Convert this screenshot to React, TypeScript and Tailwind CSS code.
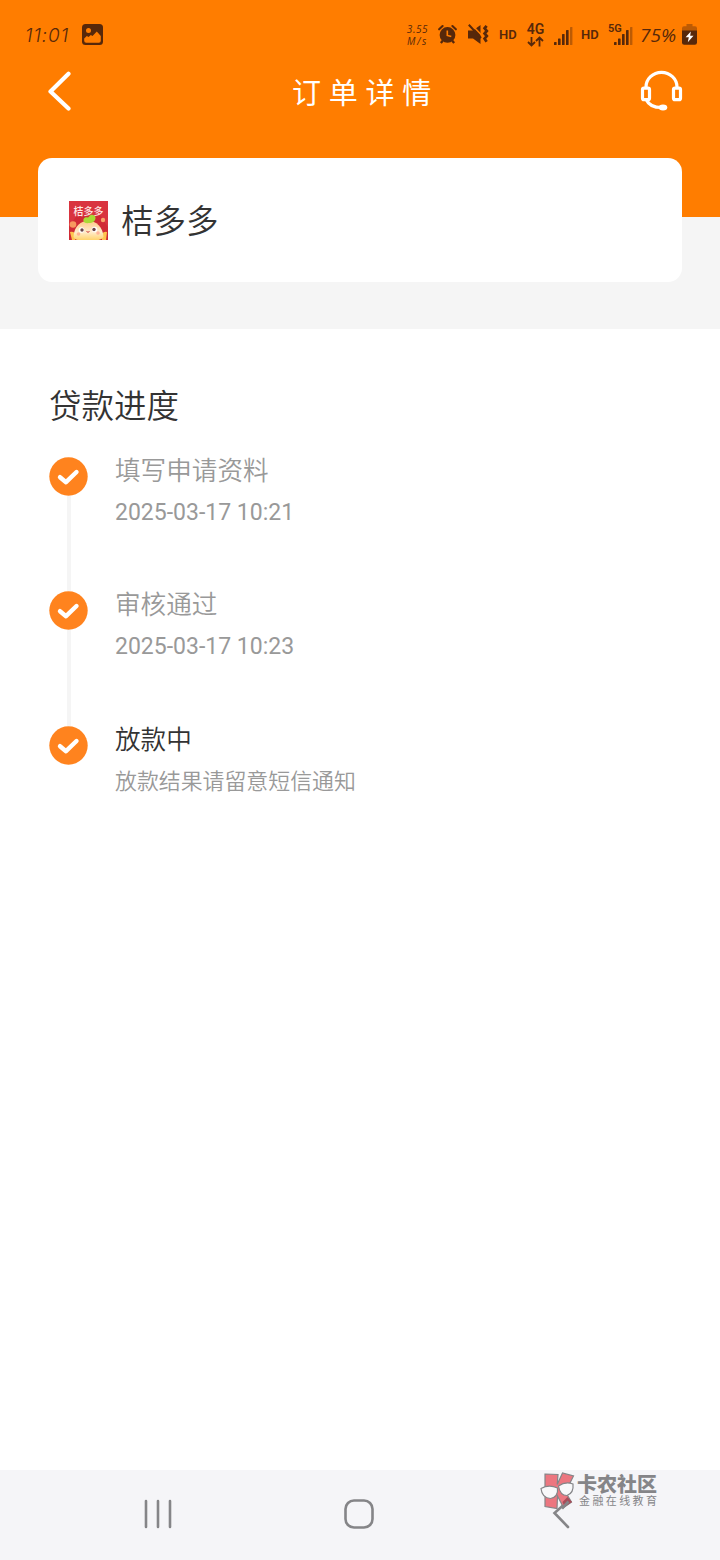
const steps = [
  { title: "填写申请资料", note: "2025-03-17 10:21", current: false },
  { title: "审核通过", note: "2025-03-17 10:23", current: false },
  { title: "放款中", note: "放款结果请留意短信通知", current: true },
];

const PictureIcon = () => (
  <svg className="ml-3 h-[21px] w-[21px]" viewBox="0 0 21 21">
    <rect width="21" height="21" rx="3.5" fill="#57280a" />
    <circle cx="6.5" cy="6.5" r="2.5" fill="#ff7d00" />
    <path d="M2.2 14.5l2.600-2.600 1.800 1 2.200-2 1.700 1 4.300-4.400 4 4.500v4.700q0 2-2 2H4.200q-2 0-2-2z" fill="#ff7d00" />
  </svg>
);

const AlarmIcon = () => (
  <svg className="ml-[9px] h-[21px] w-[19px]" viewBox="0 0 20 21" fill="none" stroke="#57280a">
    <circle cx="10" cy="11" r="8.300" fill="#57280a" stroke="none" />
    <path d="M1.2 5l3.600-3.400M18.800 5l-3.600-3.400" strokeWidth="2.2" strokeLinecap="round" />
    <path d="M5 17l-2 2.5M15 17l2 2.5" strokeWidth="2.400" />
    <path d="M9.8 6.3v5.200l4.200 1.200" stroke="#ff7d00" strokeWidth="1.7" />
  </svg>
);

const MuteIcon = () => (
  <svg className="ml-[11px] h-[21px] w-[21px]" viewBox="0 0 21 21">
    <path d="M0 6.500h5L12.500 1v19L5 14.500H0z" fill="#57280a" />
    <path d="M2.500-.5L14 11.500" stroke="#ff7d00" strokeWidth="1.6" />
    <path d="M.8 .8L13 14" stroke="#57280a" strokeWidth="2" />
    <path d="M18.600 1.800l-2 2.500 2.200 2.600-2.200 2.600 2.200 2.600-2.200 2.600 2 3" fill="none" stroke="#57280a" strokeWidth="2.800" />
  </svg>
);

const SignalBars = () => (
  <svg className="h-[18px] w-[19px]" viewBox="0 0 19 18" fill="#57280a">
    <rect x="0" y="15" width="2.6" height="3" rx=".6" />
    <rect x="4" y="11.5" width="2.6" height="6.5" rx=".6" />
    <rect x="8" y="7" width="2.6" height="11" rx=".6" />
    <rect x="12" y="3" width="2.6" height="15" rx=".6" />
    <rect x="16" y="0" width="2.4" height="18" rx=".6" opacity=".4" />
  </svg>
);

const BatteryIcon = () => (
  <svg className="ml-auto h-[21px] w-[15px]" viewBox="0 0 15 21">
    <path d="M4.5 0h6v2.3H13q2 0 2 2V8H0V4.300q0-2 2-2h2.500z" fill="#57280a" opacity=".4" />
    <path d="M0 6.500h15V18.500q0 2.200-2.200 2.200H2.200Q0 20.700 0 18.500z" fill="#57280a" />
    <path d="M8.800 7.500L3.600 13.300h3.200l-1 5 5.700-6.500H8.200z" fill="#fff" />
  </svg>
);

const StatusBar = () => (
  <div className="flex h-[68px] items-center pl-[25px] pr-[23px] text-[#57280a]">
    <span className="w-[45px] whitespace-nowrap pt-[3px] font-['Inter'] text-[19px] font-light italic leading-none tracking-[0.900px]">
      11:01
    </span>
    <PictureIcon />
    <div className="ml-auto flex w-[291px] shrink-0 items-center">
      <div className="w-[23px] pt-[2px] text-center font-['Open_Sans'] text-[10px] italic leading-[12px]">
        <div className="tracking-[0.6px]">3.55</div>
        <div className="tracking-[1.600px]">M/s</div>
      </div>
      <AlarmIcon />
      <MuteIcon />
      <span className="ml-[10px] w-[19px] font-['Roboto'] text-[13px] font-semibold leading-none">HD</span>
      <div className="ml-2 flex w-[19px] flex-col items-center pt-px">
        <span className="font-['Roboto'] text-[14px] font-semibold leading-[13px]">4G</span>
        <svg className="h-[11px] w-[17px]" viewBox="0 0 17 11" fill="none" stroke="#57280a" strokeWidth="1.8">
          <path d="M4.500 1v8.500M1 6l3.500 3.500L8 6M12.500 10.500V1.500M9 5l3.500-3.500L16 5" />
        </svg>
      </div>
      <div className="ml-[9px] pt-1"><SignalBars /></div>
      <span className="ml-2 w-[19px] font-['Roboto'] text-[13px] font-semibold leading-none">HD</span>
      <div className="relative ml-[14px] pt-1">
        <span className="absolute -left-[6px] top-0 font-['Roboto'] text-[11px] font-semibold leading-none">5G</span>
        <SignalBars />
      </div>
      <span className="ml-[7px] whitespace-nowrap pt-[2px] font-['Open_Sans'] text-[19px] italic leading-none">75%</span>
      <BatteryIcon />
    </div>
  </div>
);

const TitleBar = () => (
  <div className="flex h-[50px] items-center justify-between pl-[47px] pr-[37px] text-white">
    <svg className="mt-[-4px] h-[40px] w-[24px]" viewBox="0 0 24 40" fill="none" stroke="currentColor" strokeWidth="4.200" strokeLinecap="round" strokeLinejoin="round">
      <path d="M21.500 2.800L3.500 20.500 21.500 37.500" />
    </svg>
    <h1 className="ml-[20px] mt-[3px] text-[29px] leading-none tracking-[7.800px]">订单详情</h1>
    <svg className="mt-[-4px] h-[42px] w-[43px]" viewBox="0 0 43 42" fill="none" stroke="currentColor" strokeWidth="3.200">
      <path d="M6 18v-1a15.500 14.700 0 0 1 31 0V18" />
      <rect x="2.500" y="18.200" width="7" height="11.500" rx="1.500" />
      <rect x="33.500" y="18.200" width="7" height="11.500" rx="1.500" />
      <path d="M6.500 30c2 4.500 7 7.500 15 7.500" />
      <ellipse cx="23" cy="37.500" rx="4.300" ry="2.900" fill="currentColor" stroke="none" />
    </svg>
  </div>
);

const AppLogo = () => (
  <svg className="h-[39px] w-[39px]" viewBox="0 0 39 39">
    <defs>
      <linearGradient id="peel" x1="0" y1="0" x2="0" y2="1">
        <stop offset="0" stopColor="#ffc886" />
        <stop offset=".6" stopColor="#ffeccb" />
        <stop offset="1" stopColor="#ffd36b" />
      </linearGradient>
    </defs>
    <rect width="39" height="39" fill="#d9343f" />
    <path d="M0 39V26l8-12h23l8 12v13z" fill="#c9222d" opacity=".55" />
    <circle cx="4" cy="23.500" r="3.300" fill="#f7995f" />
    <circle cx="34" cy="19" r="2.200" fill="#f9a46a" />
    <path d="M1 31q2-1 5 1v7H3q-1-4-2-8M38 31q-3-1-5 2v6h4z" fill="#ffc44f" />
    <path d="M4.500 36C5 25 12 20 19.500 19.500 27 20 34 26 34.500 36q-2 3-5 3H9q-3 0-4.500-3z" fill="url(#peel)" />
    <text x="19.500" y="13.500" textAnchor="middle" fontSize="10" fontWeight="500" fill="#ffe9e4" fontFamily="'Noto Sans CJK SC', sans-serif">桔多多</text>
    <path d="M20 22c-6 1-7-4-4-5.500 2-1 3 1 4-1 2-3.500 7-1 6.500 1.500 0 3-3 5-6.500 5z" fill="#a9da35" />
    <circle cx="12.500" cy="29" r="2.800" fill="#fff" />
    <circle cx="25.500" cy="28.500" r="2.800" fill="#fff" />
    <circle cx="13" cy="29" r="1.700" fill="#6b4548" />
    <circle cx="25" cy="28.500" r="1.700" fill="#6b4548" />
    <path d="M17.500 30.500q1.500 1.500 3 0" stroke="#c33" fill="none" />
    <circle cx="9.500" cy="33" r="1.800" fill="#ff9d86" opacity=".7" />
    <circle cx="29" cy="32" r="1.800" fill="#ff9d86" opacity=".7" />
  </svg>
);

const CheckBadge = () => (
  <svg className="h-[39px] w-[39px] shrink-0" viewBox="0 0 39 39">
    <circle cx="19.500" cy="19.500" r="19.200" fill="#ff831e" />
    <path d="M11 20.200l6 5 10.500-10.200" fill="none" stroke="#fff" strokeWidth="4.400" strokeLinecap="round" strokeLinejoin="round" />
  </svg>
);

const Watermark = () => (
  <div className="absolute left-[540px] top-0 flex text-[#858588]">
    <svg className="mt-px h-[40px] w-[37px]" viewBox="0 0 37 40" stroke="#858588" strokeWidth="1.2">
      <path d="M5 3l13 .5-.8 10L22.500 2l11 3-8 16 6 10-8 5.500L17.500 25 17 37.500 5 35.500z" fill="#ec7680" />
      <path d="M22.500 31l5-5 4.500 5-7.500 5z" fill="#a74d5a" stroke="none" />
      <path d="M1 17.500Q9 13 17.500 17q1 9-7 10.500Q2 27 1 17.500zM18.500 15q7-5 14.500-2 1 9-6 11.500-7 0-8.500-9.500z" fill="#f8f8fa" />
      <path d="M28.500 30.500l-6.500 7" strokeWidth="2.600" />
    </svg>
    <div className="mt-[5px] whitespace-nowrap">
      <div className="text-[20px] font-black leading-[21px]">卡农社区</div>
      <div className="ml-[2px] text-[11px] leading-[12px] tracking-[2.400px]">金融在线教育</div>
    </div>
  </div>
);

export default function App() {
  return (
    <div className="flex h-[1560px] w-[720px] flex-col overflow-hidden bg-white font-['Roboto','Noto_Sans_CJK_SC',sans-serif]">
      <header className="h-[217px] shrink-0 bg-[#ff7d00]">
        <StatusBar />
        <TitleBar />
      </header>

      <section className="h-[112px] shrink-0 bg-[#f5f5f5] px-[38px]">
        <div className="-mt-[59px] flex h-[124px] items-center rounded-[14px] bg-white pl-[31px]">
          <AppLogo />
          <span className="ml-[13px] mt-[5px] text-[32.500px] font-[350] leading-none text-[#333]">桔多多</span>
        </div>
      </section>

      <main className="flex-1 pl-[49px] pt-[58px]">
        <h2 className="text-[32.500px] font-[350] leading-[40px] text-[#333]">贷款进度</h2>
        <ol className="mt-[30px]">
          {steps.map((step, i) => (
            <li key={step.title} className="flex h-[134.300px]">
              <div className="flex flex-col items-center">
                <CheckBadge />
                {i < steps.length - 1 && <div className="w-[4px] flex-1 bg-[#f5f5f5]" />}
              </div>
              <div className="ml-[27px]">
                <div className={`-mt-[3px] text-[25.600px] font-[350] leading-[34px] ${step.current ? "text-[#333]" : "text-[#999]"}`}>
                  {step.title}
                </div>
                <div className={`mt-[8px] leading-[34px] text-[#999] ${step.current ? "text-[21.900px] font-[350]" : "text-[23px]"}`}>
                  {step.note}
                </div>
              </div>
            </li>
          ))}
        </ol>
      </main>

      <nav className="relative flex h-[90px] shrink-0 items-center bg-[#f5f5f8] pb-[2px] pl-[143px] text-[#858588]">
        <svg className="h-[30px] w-[30px]" viewBox="0 0 30 30" stroke="currentColor" strokeWidth="2.600" strokeLinecap="round">
          <path d="M3 2v26M15 2v26M27 2v26" />
        </svg>
        <svg className="ml-[171px] h-[30px] w-[30px]" viewBox="0 0 30 30" fill="none" stroke="currentColor" strokeWidth="2.600">
          <rect x="1.500" y="1.500" width="27" height="27" rx="8.500" />
        </svg>
        <svg className="ml-[178px] h-[30px] w-[18px]" viewBox="0 0 18 30" fill="none" stroke="currentColor" strokeWidth="2.600" strokeLinecap="round">
          <path d="M16 2L2.500 14 16 28" />
        </svg>
        <Watermark />
      </nav>
    </div>
  );
}
